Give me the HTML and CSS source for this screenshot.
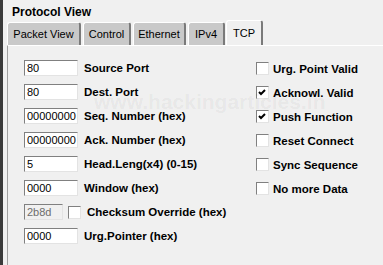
FILE: index.html
```html
<!DOCTYPE html>
<html lang="en">
<head>
<meta charset="UTF-8" />
<meta name="viewport" content="width=device-width, initial-scale=1.0" />
<title>Protocol View</title>
<link rel="stylesheet" href="styles.css">
</head>
<body>

<div class="title">Protocol View</div>

<!-- tab strip -->
<div class="tabs">
  <div class="tab w-packet">Packet View</div>
  <div class="tab w-control">Control</div>
  <div class="tab w-eth">Ethernet</div>
  <div class="tab w-ip">IPv4</div>
  <div class="tab w-tcp active">TCP</div>
</div>

<div class="panel">
  <div class="col-left">
    <div class="row"><input class="field" type="text" value="80" readonly><span class="lbl">Source Port</span></div>
    <div class="row"><input class="field" type="text" value="80" readonly><span class="lbl">Dest. Port</span></div>
    <div class="row"><input class="field" type="text" value="00000000" readonly><span class="lbl">Seq. Number (hex)</span></div>
    <div class="row"><input class="field" type="text" value="00000000" readonly><span class="lbl">Ack. Number (hex)</span></div>
    <div class="row"><input class="field" type="text" value="5" readonly><span class="lbl">Head.Leng(x4) (0-15)</span></div>
    <div class="row"><input class="field" type="text" value="0000" readonly><span class="lbl">Window (hex)</span></div>
    <div class="row">
      <input class="field short" type="text" value="2b8d" disabled>
      <span class="chk"></span>
      <span class="lbl">Checksum Override (hex)</span>
    </div>
    <div class="row"><input class="field" type="text" value="0000" readonly><span class="lbl">Urg.Pointer (hex)</span></div>
  </div>

  <div class="col-right">
    <div class="crow"><span class="chk"></span><span class="lbl">Urg. Point Valid</span></div>
    <div class="crow"><span class="chk on"><svg viewBox="0 0 11 11" width="11" height="11"><polyline points="2,5 4,7 8,3" fill="none" stroke="#000" stroke-width="2"/></svg></span><span class="lbl">Acknowl. Valid</span></div>
    <div class="crow"><span class="chk on"><svg viewBox="0 0 11 11" width="11" height="11"><polyline points="2,5 4,7 8,3" fill="none" stroke="#000" stroke-width="2"/></svg></span><span class="lbl">Push Function</span></div>
    <div class="crow"><span class="chk"></span><span class="lbl">Reset Connect</span></div>
    <div class="crow"><span class="chk"></span><span class="lbl">Sync Sequence</span></div>
    <div class="crow"><span class="chk"></span><span class="lbl">No more Data</span></div>
  </div>

  <div class="watermark">www.hackingarticles.in</div>
</div>

</body>
</html>
```

FILE: styles.css
```css
body {
  margin: 0;
  padding: 0;
  height: 265px;
  overflow: hidden;
  background-color: #f0f0f0;
  border-left: 3px solid #3a3a3a;
  font-family: "Liberation Sans", Arial, sans-serif;
  color: #000;
}
.title {
  font-size: 12px;
  font-weight: bold;
  padding: 5px 0 0 9px;
  height: 15px;
  line-height: 15px;
}
.tabs {
  display: flex;
  align-items: flex-end;
  margin-left: 4px;
  height: 25px;
  gap: 2px;
}
.tab {
  height: 23px;
  line-height: 22px;
  text-align: center;
  font-size: 11px;
  background-color: #c9c9c9;
  border-top: 1px solid #ffffff;
  border-left: 1px solid #ffffff;
  border-right: 2px solid #7a7a7a;
  border-radius: 3px 3px 0 0;
  box-sizing: border-box;
}
.w-packet { width: 74px; }
.w-control { width: 48px; }
.w-eth { width: 53px; }
.w-ip { width: 37px; }
.w-tcp { width: 37px; }
.tab.active {
  height: 25px;
  line-height: 25px;
  background-color: #f0f0f0;
  margin-left: -1px;
}
.panel {
  position: relative;
  display: flex;
  margin-left: 4px;
  border-top: 1px solid #ffffff;
  border-left: 1px solid #a0a0a0;
  height: 220px;
  padding: 14px 0 0 16px;
  box-sizing: border-box;
}
.col-left {
  width: 232px;
}
.row {
  display: flex;
  align-items: center;
  height: 16px;
  margin-bottom: 8px;
}
.field {
  width: 54px;
  height: 16px;
  box-sizing: border-box;
  margin: 0 6px 0 0;
  padding: 0 0 0 2px;
  border-top: 1px solid #808080;
  border-left: 1px solid #808080;
  border-right: 1px solid #e3e3e3;
  border-bottom: 1px solid #e3e3e3;
  background-color: #ffffff;
  font-family: "Liberation Sans", Arial, sans-serif;
  font-size: 11px;
  color: #000;
  outline: none;
}
.field.short {
  width: 39px;
  margin-right: 5px;
  background-color: #f0f0f0;
  color: #6d6d6d;
}
.lbl {
  font-size: 11.5px;
  font-weight: bold;
  white-space: nowrap;
}
.chk {
  display: inline-flex;
  align-items: center;
  justify-content: center;
  width: 13px;
  height: 13px;
  box-sizing: border-box;
  margin-right: 6px;
  background-color: #ffffff;
  border-top: 1px solid #808080;
  border-left: 1px solid #808080;
  border-right: 1px solid #e3e3e3;
  border-bottom: 1px solid #e3e3e3;
}
.col-right {
  padding-top: 2px;
}
.crow {
  display: flex;
  align-items: center;
  height: 13px;
  margin-bottom: 11px;
}
.crow .chk {
  margin-right: 4px;
}
.watermark {
  position: absolute;
  left: 86px;
  top: 44px;
  font-size: 21px;
  font-weight: bold;
  color: rgba(0, 0, 0, 0.05);
  pointer-events: none;
  white-space: nowrap;
}
```
